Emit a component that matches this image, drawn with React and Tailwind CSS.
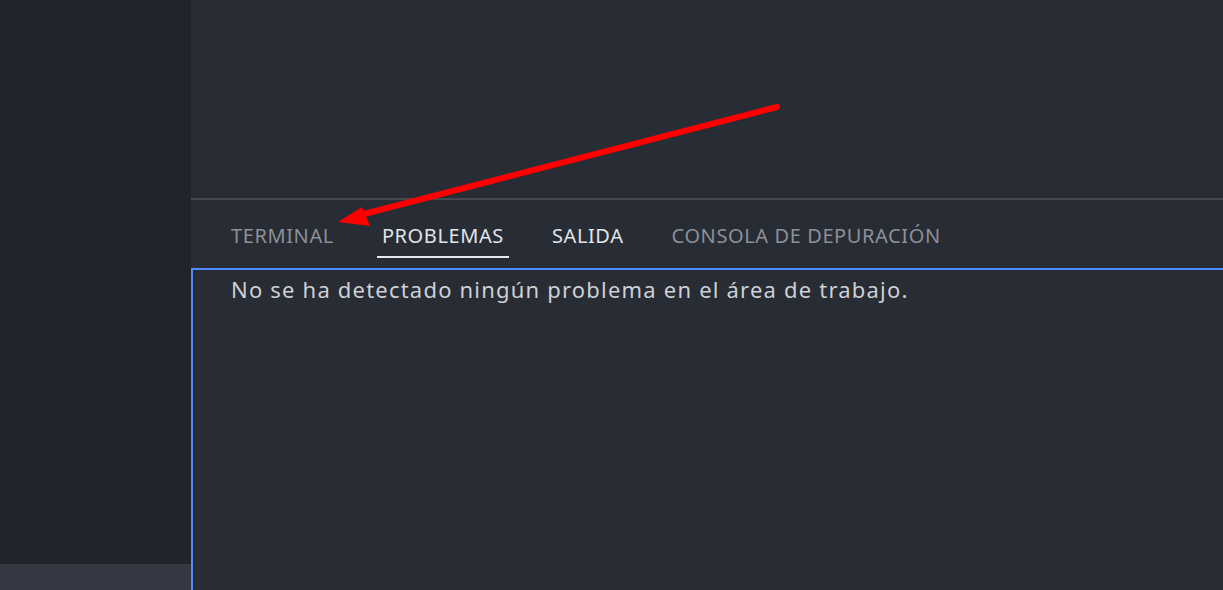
export default function App() {
  const tabs = [
    { label: "TERMINAL", active: false, dim: true },
    { label: "PROBLEMAS", active: true, dim: false },
    { label: "SALIDA", active: false, dim: false },
    { label: "CONSOLA DE DEPURACIÓN", active: false, dim: true },
  ]

  return (
    <div className="relative flex h-[590px] w-[1223px] overflow-hidden bg-[#282c34] font-['Noto_Sans',sans-serif]">
      {/* sidebar */}
      <div className="flex w-[191px] shrink-0 flex-col">
        <div className="flex-1 bg-[#21252b]" />
        <div className="h-[26px] bg-[#333842]" />
      </div>

      {/* editor + panel */}
      <div className="flex flex-1 flex-col">
        <div className="h-[198px] shrink-0" />
        <div className="flex h-[70px] shrink-0 items-start gap-[38px] border-t-2 border-[#45484e] pl-[35px] pt-[22px]">
          {tabs.map(t => (
            <div
              key={t.label}
              className={`whitespace-nowrap px-[5px] pb-[6px] text-[20px] leading-[28px] tracking-[0.6px] ${
                t.active ? "border-b-2 border-[#e6e8ec]" : "border-b-2 border-transparent"
              } ${t.dim ? "text-[#8c9099]" : "text-[#e1e4ea]"}`}
            >
              {t.label}
            </div>
          ))}
        </div>
        <div className="flex-1 border-l-2 border-t-2 border-[#528bff] pl-[38px] pt-[4px]">
          <p className="whitespace-nowrap text-[22px] leading-[30px] tracking-[1.2px] text-[#cdd0d6]">
            No se ha detectado ningún problema en el área de trabajo.
          </p>
        </div>
      </div>

      {/* annotation arrow */}
      <svg className="pointer-events-none absolute inset-0" width="1223" height="590">
        <line x1="777" y1="107" x2="360" y2="215" stroke="#ff0000" strokeWidth="6" strokeLinecap="round" />
        <polygon points="338,222 362,207 370,226" fill="#ff0000" />
      </svg>
    </div>
  )
}
